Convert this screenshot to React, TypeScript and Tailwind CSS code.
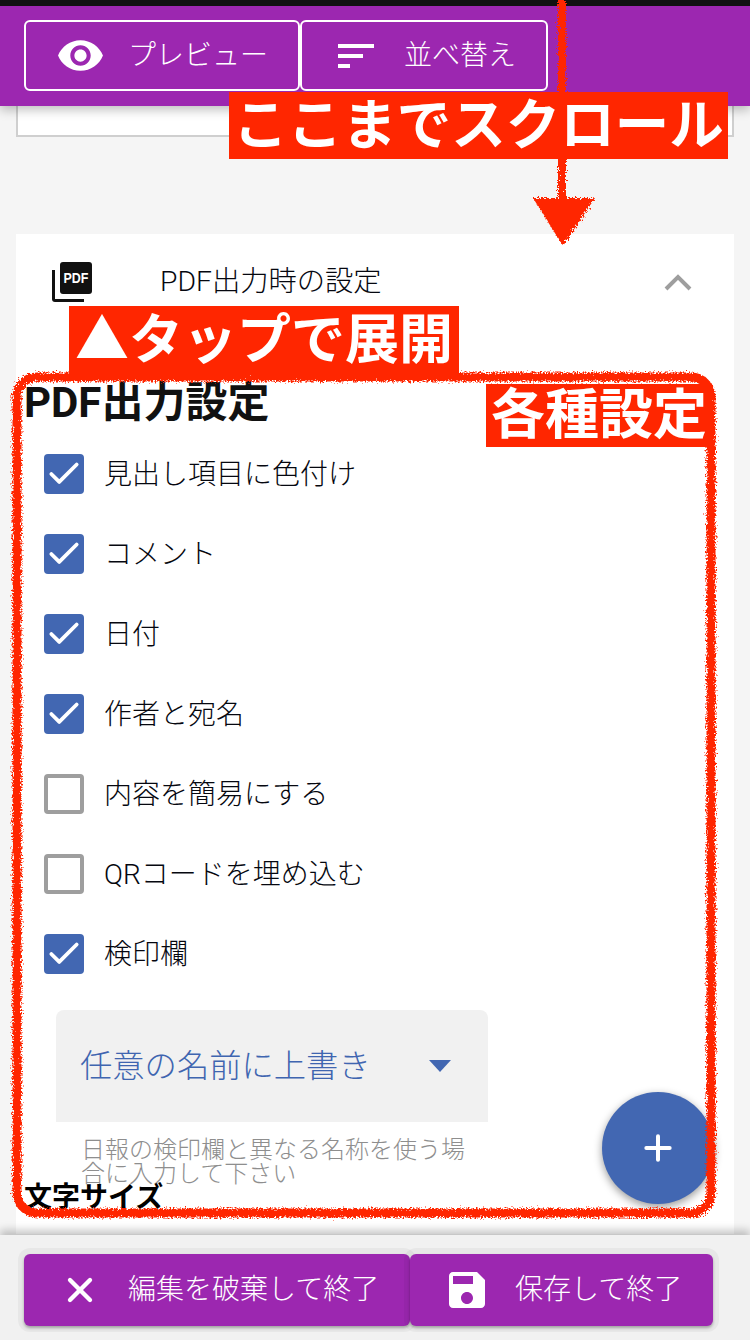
import { Check, Plus, X } from "lucide-react"

const options = [
  { label: "見出し項目に色付け", checked: true },
  { label: "コメント", checked: true },
  { label: "日付", checked: true },
  { label: "作者と宛名", checked: true },
  { label: "内容を簡易にする", checked: false },
  { label: "QRコードを埋め込む", checked: false },
  { label: "検印欄", checked: true },
]

function EyeIcon() {
  return (
    <svg viewBox="0 0 24 24" className="w-[49px] h-[49px] fill-white">
      <path d="M12 4.5C7 4.5 2.73 7.61 1 12c1.73 4.39 6 7.5 11 7.5s9.27-3.11 11-7.5c-1.73-4.39-6-7.5-11-7.5zM12 17c-2.76 0-5-2.24-5-5s2.24-5 5-5 5 2.24 5 5-2.24 5-5 5zm0-8c-1.66 0-3 1.34-3 3s1.34 3 3 3 3-1.34 3-3-1.34-3-3-3z" />
    </svg>
  )
}

function SortIcon() {
  return (
    <svg viewBox="0 0 36 24" className="w-[36px] h-[24px] fill-white">
      <rect x="0" y="0" width="36" height="4" />
      <rect x="0" y="10" width="25" height="4" />
      <rect x="0" y="20" width="12" height="4" />
    </svg>
  )
}

function SaveIcon() {
  return (
    <svg viewBox="3 3 18 18" className="w-[36px] h-[36px] fill-white">
      <path d="M17 3H5c-1.11 0-2 .9-2 2v14c0 1.1.89 2 2 2h14c1.1 0 2-.9 2-2V7l-4-4zm-5 16c-1.66 0-3-1.34-3-3s1.34-3 3-3 3 1.34 3 3-1.34 3-3 3zm3-10H5V5h10v4z" />
    </svg>
  )
}

function PdfIcon() {
  return (
    <svg viewBox="0 0 40 40" className="w-[40px] h-[40px]">
      <rect x="8" y="0" width="32" height="32" rx="3" fill="#111" />
      <path d="M0 8h3v29h29v3H3a3 3 0 0 1-3-3z" fill="#111" />
      <text x="24" y="21" textAnchor="middle" fontSize="15" fontWeight="700" fontFamily="Liberation Sans" textLength="25" lengthAdjust="spacingAndGlyphs" fill="#fff">
        PDF
      </text>
    </svg>
  )
}

function Option({ label, checked }: { label: string; checked: boolean }) {
  return (
    <div className="h-[80px] flex items-center pl-[28px] gap-[20px]">
      {checked ? (
        <div className="w-[40px] h-[40px] rounded bg-[#4267b2] flex items-center justify-center">
          <Check className="w-[38px] h-[38px] text-white" strokeWidth={2.4} />
        </div>
      ) : (
        <div className="w-[40px] h-[40px] rounded border-4 border-[#9e9e9e] bg-white" />
      )}
      <span className="pt-[1px] text-[28px] font-light text-[#05070f]">{label}</span>
    </div>
  )
}

// 赤い手書き注釈
function Annotations() {
  return (
    <div className="absolute inset-0 z-20 pointer-events-none">
      <svg className="absolute inset-0" width="750" height="1340" viewBox="0 0 750 1340" fill="none">
        <defs>
          <filter id="rough" x="-5%" y="-5%" width="110%" height="110%">
            <feTurbulence type="fractalNoise" baseFrequency="0.6" numOctaves="3" seed="4" />
            <feDisplacementMap in="SourceGraphic" scale="8" />
          </filter>
        </defs>
        <g filter="url(#rough)">
          <rect x="17" y="377" width="694" height="836" rx="20" stroke="#ff2600" strokeWidth="9" />
          <path d="M562 0V205" stroke="#ff2600" strokeWidth="8" />
          <path d="M533 198L595 198L563 246Z" fill="#ff2600" />
        </g>
      </svg>
      <div className="absolute left-[229px] top-[92px] w-[499px] h-[67px] bg-[#ff2600] flex items-center justify-center text-[54.5px] font-bold text-white whitespace-nowrap">
        ここまでスクロール
      </div>
      <div className="absolute left-[69px] top-[306px] w-[390px] h-[69px] bg-[#ff2600] flex items-center justify-center text-[54px] font-bold text-white whitespace-nowrap">
        ▲タップで展開
      </div>
      <div className="absolute left-[486px] top-[384px] w-[226px] h-[63px] bg-[#ff2600] flex items-center justify-center text-[54px] font-bold text-white whitespace-nowrap">
        各種設定
      </div>
    </div>
  )
}

export default function App() {
  return (
    <div className="relative w-[750px] h-[1340px] overflow-hidden flex flex-col bg-[#f5f5f5] font-[Roboto,'Noto_Sans_CJK_JP',sans-serif]">
      {/* Header */}
      <header className="relative z-10 h-[106px] shrink-0 border-t-[6px] border-[#111111] bg-[#9c27b0] pl-[24px] pt-[14px] shadow-[0_4px_10px_rgba(0,0,0,0.25)]">
        <div className="flex h-[71px] text-[28px] font-light text-white">
          <button className="w-[276px] flex items-center rounded-[6px] border-2 border-white pl-[30px]">
            <EyeIcon />
            <span className="ml-[23px]">プレビュー</span>
          </button>
          <button className="w-[248px] flex items-center rounded-[6px] border-2 border-white pl-[36px]">
            <SortIcon />
            <span className="ml-[30px]">並べ替え</span>
          </button>
        </div>
      </header>

      {/* Main */}
      <main className="flex-1 overflow-hidden px-[16px]">
        <div className="h-[31px] bg-white border-x-2 border-b-2 border-[#cfcfcf]" />
        <section className="mt-[97px] bg-white h-[1000px]">
          <div className="h-[96px] flex items-center pl-[36px] pr-[42px]">
            <PdfIcon />
            <span className="ml-[68px] text-[28.3px] font-light text-[#05070f]">PDF出力時の設定</span>
            <svg viewBox="0 0 28 18" className="ml-auto w-[28px] h-[18px] fill-none stroke-[#9e9e9e] stroke-[4px]">
              <path d="M2 16L14 4L26 16" />
            </svg>
          </div>
          <h2 className="mt-[49px] ml-[8px] h-[48px] text-[42px] leading-[48px] font-bold text-[#111]">PDF出力設定</h2>
          <div className="mt-[7px]">
            {options.map((item) => (
              <Option key={item.label} label={item.label} checked={item.checked} />
            ))}
          </div>
          <div className="ml-[40px] mt-[16px] w-[432px]">
            <div className="h-[112px] bg-[#f1f1f1] rounded-t-lg flex items-center pl-[24px] pr-[37px] text-[32.3px] font-light text-[#3f65b0]">
              <span>任意の名前に上書き</span>
              <svg viewBox="0 0 22 12" className="ml-auto w-[22px] h-[12px] fill-[#4267b2]">
                <path d="M0 0H22L11 12Z" />
              </svg>
            </div>
            <p className="pt-[16px] pl-[25px] pr-[20px] text-[24px] leading-[24px] font-light text-[#8e8e8e]">
              日報の検印欄と異なる名称を使う場合に入力して下さい
            </p>
          </div>
          <h3 className="ml-[8px] text-[28px] leading-[24px] font-bold text-black">文字サイズ</h3>
        </section>
      </main>

      {/* Footer */}
      <footer className="relative z-10 h-[105px] shrink-0 bg-[#f1f1f1] pl-[24px] pt-[19px] shadow-[0_-5px_8px_rgba(0,0,0,0.22)]">
        <div className="flex h-[72px] text-[28px] font-light text-white">
          <button className="w-[386px] flex items-center rounded-md bg-[#9c27b0] pl-[36px] shadow-[0_2px_3px_rgba(0,0,0,0.3),0_0_0_6px_rgba(0,0,0,0.04)]">
            <X className="w-[40px] h-[40px] text-white" strokeWidth={2.6} />
            <span className="ml-[28px]">編集を破棄して終了</span>
          </button>
          <button className="w-[303px] flex items-center rounded-md bg-[#9c27b0] pl-[39px] shadow-[0_2px_3px_rgba(0,0,0,0.3),0_0_0_6px_rgba(0,0,0,0.04)]">
            <SaveIcon />
            <span className="ml-[30px]">保存して終了</span>
          </button>
        </div>
      </footer>

      {/* FAB */}
      <button className="absolute z-10 left-[602px] top-[1092px] w-[112px] h-[112px] rounded-full bg-[#4267b2] flex items-center justify-center shadow-[0_3px_8px_rgba(0,0,0,0.4)]">
        <Plus className="w-[40px] h-[40px] text-white" strokeWidth={2.4} />
      </button>

      <Annotations />
    </div>
  )
}
